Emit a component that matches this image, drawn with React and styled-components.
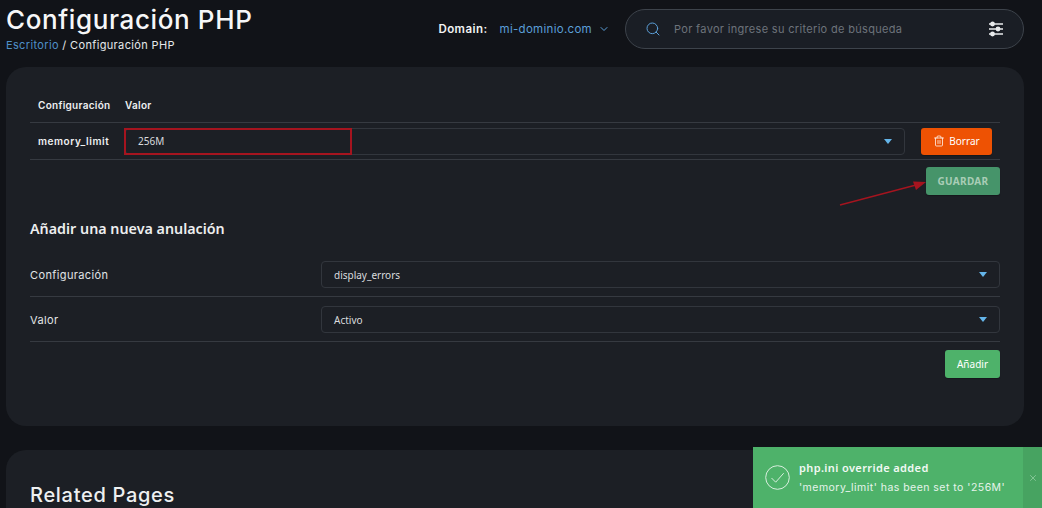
import React from "react";
import styled, { createGlobalStyle } from "styled-components";
import { ChevronDown, Search, Trash2, X } from "lucide-react";

const Global = createGlobalStyle`
  html, body { margin: 0; padding: 0; background: #111318; height: 100%; overflow: hidden; }
  * { box-sizing: border-box; }
  body { font-family: Inter, "Noto Sans", "Liberation Sans", sans-serif; color: #fff; }
`;

const Page = styled.div`
  width: 1042px;
  height: 508px;
  overflow: hidden;
  position: relative;
  padding: 0 18px 0 6px;
`;
const Header = styled.header`
  height: 67px;
  display: flex;
  justify-content: space-between;
  align-items: flex-start;
`;
const TitleBlock = styled.div`
  display: flex;
  flex-direction: column;
`;
const Title = styled.h1`
  margin: 4px 0 0;
  font-size: 26px;
  line-height: 32px;
  font-weight: 500;
  letter-spacing: 0.62px;
  color: #f6f7f8;
`;
const Crumbs = styled.div`
  margin-top: 1px;
  font-size: 11px;
  line-height: 16px;
  letter-spacing: 0.35px;
  color: #e6e8ea;
`;
const CrumbLink = styled.span`
  color: #4f90c8;
`;
const Tools = styled.div`
  display: flex;
  align-items: center;
  padding-top: 9px;
`;
const DomainLabel = styled.span`
  font-size: 11.5px;
  font-weight: 600;
  letter-spacing: 0.45px;
  color: #f2f3f4;
`;
const DomainValue = styled.span`
  margin-left: 12px;
  font-size: 11.5px;
  letter-spacing: 0.3px;
  color: #5b9fd8;
`;
const DomainCaret = styled(ChevronDown)`
  margin-left: 6px;
  color: #5b9fd8;
`;
const SearchBox = styled.div`
  margin-left: 15px;
  width: 399px;
  height: 40px;
  border-radius: 20px;
  border: 1px solid #3d434b;
  background: #1a1e25;
  display: flex;
  align-items: center;
  padding: 0 19px;
`;
const SearchIcon = styled(Search)`
  color: #5b9fd8;
  flex: none;
`;
const Placeholder = styled.span`
  margin-left: 13px;
  flex: 1;
  font-size: 11px;
  letter-spacing: 0.32px;
  color: #6d737b;
`;
const Card = styled.section`
  position: relative;
  background: #1c1f25;
  border-radius: 20px;
  padding: 21px 24px 0;
  height: ${(p) => p.$h}px;
  margin-bottom: 24px;
`;
const HeadRow = styled.div`
  height: 35px;
  display: flex;
  align-items: center;
  border-bottom: 1px solid #363a41;
  padding-left: 8px;
`;
const HeadCell = styled.div`
  width: ${(p) => p.$w || "auto"};
  font-size: 10px;
  font-weight: 600;
  letter-spacing: 0.28px;
  color: #eef0f1;
`;
const OverrideRow = styled.div`
  height: 37px;
  display: flex;
  align-items: center;
  border-bottom: 1px solid #363a41;
  padding-left: 8px;
`;
const KeyCell = styled.div`
  width: 87px;
  font-size: 10px;
  font-weight: 600;
  letter-spacing: 0.55px;
  color: #eef0f1;
`;
const Select = styled.div`
  flex: 1;
  height: 27px;
  border: 1px solid #32363d;
  border-radius: 4px;
  display: flex;
  align-items: center;
  justify-content: space-between;
  padding: 0 12px;
  font-family: "Noto Sans", sans-serif;
  font-size: 10px;
  color: #d9dbde;
`;
const Caret = styled.span`
  width: 0;
  height: 0;
  border-left: 4.5px solid transparent;
  border-right: 4.5px solid transparent;
  border-top: 5px solid #64b5ea;
`;
const Button = styled.button`
  border: 0;
  border-radius: 3px;
  color: ${(p) => p.$fg || "#fff"};
  background: ${(p) => p.$bg};
  height: ${(p) => p.$h}px;
  width: ${(p) => p.$w}px;
  font-family: "Noto Sans", sans-serif;
  font-size: 10px;
  font-weight: ${(p) => p.$weight || 400};
  letter-spacing: ${(p) => p.$ls || "0"};
  display: inline-flex;
  align-items: center;
  justify-content: center;
  gap: 4px;
  padding: 0;
  box-shadow: 0 1px 1px rgba(0, 0, 0, 0.25);
`;
const DeleteButton = styled(Button)`
  margin: 0 8px 0 16px;
`;
const Actions = styled.div`
  display: flex;
  justify-content: flex-end;
  padding-top: ${(p) => p.$top}px;
`;
const SubTitle = styled.h2`
  margin: 24px 0 22px;
  font-family: "Noto Sans", sans-serif;
  font-size: 14.3px;
  line-height: 20px;
  font-weight: 600;
  color: #eceeef;
`;
const FormRow = styled.div`
  height: ${(p) => p.$h}px;
  padding-top: ${(p) => p.$top || 0}px;
  display: flex;
  align-items: flex-start;
  border-bottom: 1px solid #363a41;
`;
const FormLabel = styled.div`
  width: 291px;
  height: 27px;
  display: flex;
  align-items: center;
  font-size: 11px;
  letter-spacing: 0.38px;
  color: #e2e4e6;
`;
const Related = styled.h2`
  margin: 11px 0 0;
  font-size: 20px;
  line-height: 26px;
  font-weight: 500;
  letter-spacing: 0.7px;
  color: #eef0f1;
`;
const Highlight = styled.div`
  position: absolute;
  left: 124px;
  top: 128px;
  width: 228px;
  height: 27px;
  border: 2px solid #a5141f;
`;
const Arrow = styled.svg`
  position: absolute;
  left: 838px;
  top: 178px;
`;
const Toast = styled.div`
  position: absolute;
  left: 753px;
  top: 447px;
  width: 289px;
  height: 61px;
  background: #4eb26a;
  display: flex;
`;
const ToastBody = styled.div`
  flex: 1;
  display: flex;
  align-items: center;
  padding-left: 12px;
`;
const ToastText = styled.div`
  margin-left: 9px;
  display: flex;
  flex-direction: column;
  gap: 6px;
`;
const ToastTitle = styled.div`
  font-family: "Noto Sans", sans-serif;
  font-size: 11px;
  line-height: 14px;
  font-weight: 600;
  letter-spacing: 0.38px;
  color: #f2f9f4;
`;
const ToastMessage = styled.div`
  font-size: 10.5px;
  line-height: 14px;
  letter-spacing: 0.47px;
  color: #e6f4ea;
  white-space: nowrap;
`;
const ToastClose = styled.div`
  width: 19px;
  background: #47a361;
  display: flex;
  align-items: center;
  justify-content: center;
  color: #a5d8b4;
`;

const Sliders = () => (
  <svg width="16" height="16" viewBox="0 0 16 16" fill="none" stroke="#e8eaec" strokeWidth="1.4">
    <path d="M1 3h14M1 8h14M1 13h14" />
    <circle cx="4.5" cy="3" r="1.7" fill="#e8eaec" />
    <circle cx="10" cy="8" r="1.7" fill="#e8eaec" />
    <circle cx="4.5" cy="13" r="1.7" fill="#e8eaec" />
  </svg>
);

const CheckCircle = () => (
  <svg width="25" height="25" viewBox="0 0 25 25" fill="none" stroke="#e6f4ea" strokeWidth="0.9">
    <circle cx="12.5" cy="12.5" r="11.8" />
    <path d="M6.5 13l4.2 4.2 8-9" />
  </svg>
);

export default function App() {
  return (
    <Page>
      <Global />
      <Header>
        <TitleBlock>
          <Title>Configuración PHP</Title>
          <Crumbs>
            <CrumbLink>Escritorio</CrumbLink> / Configuración PHP
          </Crumbs>
        </TitleBlock>
        <Tools>
          <DomainLabel>Domain:</DomainLabel>
          <DomainValue>mi-dominio.com</DomainValue>
          <DomainCaret size={12} strokeWidth={2} />
          <SearchBox>
            <SearchIcon size={16} strokeWidth={1.5} />
            <Placeholder>Por favor ingrese su criterio de búsqueda</Placeholder>
            <Sliders />
          </SearchBox>
        </Tools>
      </Header>
      <Card $h={359}>
        <HeadRow>
          <HeadCell $w="87px">Configuración</HeadCell>
          <HeadCell>Valor</HeadCell>
        </HeadRow>
        <OverrideRow>
          <KeyCell>memory_limit</KeyCell>
          <Select>
            256M
            <Caret />
          </Select>
          <DeleteButton $bg="#ee5203" $w={71} $h={27}>
            <Trash2 size={12} strokeWidth={1.5} />
            Borrar
          </DeleteButton>
        </OverrideRow>
        <Actions $top={7}>
          <Button $bg="#46946a" $fg="#a9cdb6" $w={74} $h={28} $weight={700} $ls="0.3px">
            GUARDAR
          </Button>
        </Actions>
        <SubTitle>Añadir una nueva anulación</SubTitle>
        <FormRow $h={36}>
          <FormLabel>Configuración</FormLabel>
          <Select>
            display_errors
            <Caret />
          </Select>
        </FormRow>
        <FormRow $h={45} $top={9}>
          <FormLabel>Valor</FormLabel>
          <Select>
            Activo
            <Caret />
          </Select>
        </FormRow>
        <Actions $top={8}>
          <Button $bg="#4eb26a" $w={55} $h={28}>
            Añadir
          </Button>
        </Actions>
      </Card>
      <Card $h={80}>
        <Related>Related Pages</Related>
      </Card>
      <Highlight />
      <Arrow width="90" height="30" viewBox="0 0 90 30">
        <path d="M2 27L78 7" stroke="#a5141f" strokeWidth="1.3" fill="none" />
        <path d="M88 4L75 3.5L78 12Z" fill="#a5141f" />
      </Arrow>
      <Toast>
        <ToastBody>
          <CheckCircle />
          <ToastText>
            <ToastTitle>php.ini override added</ToastTitle>
            <ToastMessage>'memory_limit' has been set to '256M'</ToastMessage>
          </ToastText>
        </ToastBody>
        <ToastClose>
          <X size={10} strokeWidth={1.5} />
        </ToastClose>
      </Toast>
    </Page>
  );
}
